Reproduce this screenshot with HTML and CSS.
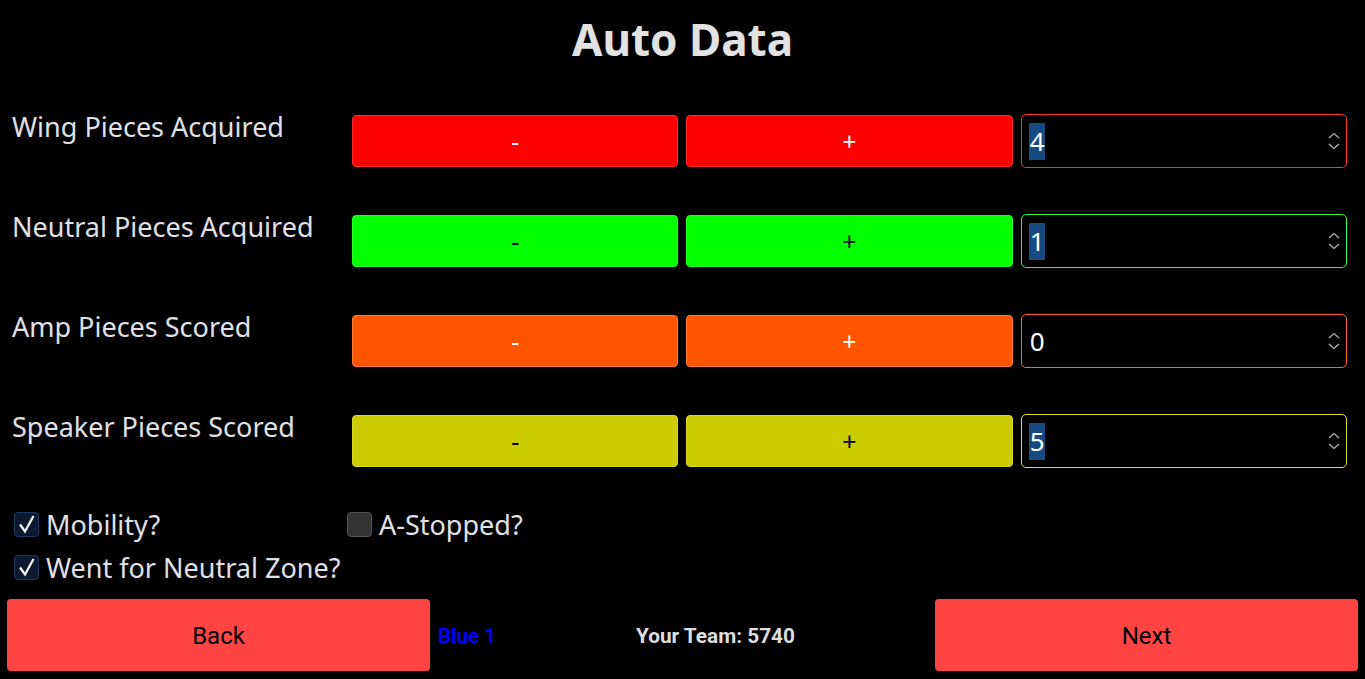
FILE: index.html
```html
<!DOCTYPE html>
<html>
<head>
<meta charset="utf-8">
<link rel="stylesheet" href="styles.css">
</head>
<body>
<h1 class="title">Auto Data</h1>
<div class="rows">
  <div class="row">
    <div class="label">Wing Pieces Acquired</div>
    <button class="btn red light">-</button>
    <button class="btn red light">+</button>
    <div class="num b-red"><span class="val sel">4</span><span class="spin"><svg width="12" height="18" viewBox="0 0 12 18"><path d="M1 6 L6 1.5 L11 6 M1 12 L6 16.5 L11 12" fill="none" stroke="#b5b5b5" stroke-width="1.2"/></svg></span></div>
  </div>
  <div class="row">
    <div class="label">Neutral Pieces Acquired</div>
    <button class="btn green">-</button>
    <button class="btn green">+</button>
    <div class="num b-green"><span class="val sel">1</span><span class="spin"><svg width="12" height="18" viewBox="0 0 12 18"><path d="M1 6 L6 1.5 L11 6 M1 12 L6 16.5 L11 12" fill="none" stroke="#b5b5b5" stroke-width="1.2"/></svg></span></div>
  </div>
  <div class="row">
    <div class="label">Amp Pieces Scored</div>
    <button class="btn orange light">-</button>
    <button class="btn orange light">+</button>
    <div class="num b-orange"><span class="val">0</span><span class="spin"><svg width="12" height="18" viewBox="0 0 12 18"><path d="M1 6 L6 1.5 L11 6 M1 12 L6 16.5 L11 12" fill="none" stroke="#b5b5b5" stroke-width="1.2"/></svg></span></div>
  </div>
  <div class="row">
    <div class="label">Speaker Pieces Scored</div>
    <button class="btn yellow">-</button>
    <button class="btn yellow">+</button>
    <div class="num b-yellow"><span class="val sel">5</span><span class="spin"><svg width="12" height="18" viewBox="0 0 12 18"><path d="M1 6 L6 1.5 L11 6 M1 12 L6 16.5 L11 12" fill="none" stroke="#b5b5b5" stroke-width="1.2"/></svg></span></div>
  </div>
</div>
<div class="checks">
  <div class="check-line">
    <label class="check first"><span class="box on"><svg width="20" height="20" viewBox="0 0 20 20"><path d="M3 10.5 L8 17.5 L16.5 2" fill="none" stroke="#fff" stroke-width="2.2"/></svg></span>Mobility?</label>
    <label class="check"><span class="box"></span>A-Stopped?</label>
  </div>
  <div class="check-line">
    <label class="check"><span class="box on"><svg width="20" height="20" viewBox="0 0 20 20"><path d="M3 10.5 L8 17.5 L16.5 2" fill="none" stroke="#fff" stroke-width="2.2"/></svg></span>Went for Neutral Zone?</label>
  </div>
</div>
<div class="footer">
  <button class="nav">Back</button>
  <div class="alliance">Blue 1</div>
  <div class="team">Your Team: 5740</div>
  <div></div>
  <button class="nav">Next</button>
</div>
</body>
</html>
```
FILE: styles.css
```css
html, body {
  margin: 0;
  padding: 0;
  background: #000;
}
body {
  width: 1365px;
  height: 679px;
  overflow: hidden;
  font-family: "Noto Sans", sans-serif;
  color: #e0e0e6;
}
.title {
  margin: 0;
  padding-top: 11px;
  height: 62px;
  text-align: center;
  font-size: 44px;
  font-weight: 700;
  line-height: 56px;
  color: #e2e2e2;
}
.rows {
  padding: 41px 18px 0 12px;
  display: flex;
  flex-direction: column;
  gap: 47px;
}
.row {
  display: grid;
  grid-template-columns: 332px 1fr 1fr 1fr;
  column-gap: 8px;
  align-items: center;
  height: 53px;
}
.label {
  align-self: start;
  font-size: 27px;
  line-height: 28px;
  margin-top: -1px;
  white-space: nowrap;
}
.btn {
  height: 52px;
  border-radius: 4px;
  font-family: "Noto Sans", sans-serif;
  font-size: 25px;
  color: #000;
  border: 1px solid transparent;
  padding: 0;
}
.btn.light { color: #fff; }
.red { background: #ff0000; border-color: #ff2a2a; }
.green { background: #00ff00; border-color: #22ff22; }
.orange { background: #ff5500; border-color: #ff7a33; }
.yellow { background: #cccc00; border-color: #d8d820; }
.num {
  height: 54px;
  box-sizing: border-box;
  border: 1px solid;
  border-radius: 5px;
  display: flex;
  align-items: center;
  justify-content: space-between;
  padding: 0 5px 0 7px;
}
.b-red { border-color: #ff3333; }
.b-green { border-color: #33ff33; }
.b-orange { border-color: #ff6622; }
.b-yellow { border-color: #e0e030; }
.val {
  font-size: 26px;
  line-height: 37px;
  color: #fff;
  padding: 0 0 0 1px;
}
.val.sel {
  background: #174a80;
}
.spin {
  display: flex;
  margin-right: 1px;
}
.checks {
  padding: 39px 0 0 14px;
  display: flex;
  flex-direction: column;
  gap: 7px;
}
.check-line {
  display: flex;
  height: 36px;
  align-items: center;
}
.check {
  display: flex;
  align-items: center;
  font-size: 27px;
  color: #e0e0e6;
}
.check.first {
  width: 333px;
}
.box {
  width: 25px;
  height: 25px;
  box-sizing: border-box;
  border-radius: 4px;
  background: #333;
  border: 1px solid #555;
  margin-right: 7px;
  display: flex;
  align-items: center;
  justify-content: center;
}
.box.on {
  background: #0b1a2e;
  border-color: #1e3a60;
}
.footer {
  position: absolute;
  left: 7px;
  top: 599px;
  width: 1351px;
  display: grid;
  grid-template-columns: 423px 206px auto 1fr 423px;
  align-items: center;
}
.nav {
  height: 72px;
  padding-top: 3px;
  background: #ff4444;
  border: none;
  border-radius: 4px;
  font-family: Roboto, sans-serif;
  font-size: 24px;
  color: #000;
}
.alliance {
  padding-left: 8px;
  padding-top: 2px;
  font-family: Roboto, sans-serif;
  font-weight: 700;
  font-size: 20.5px;
  color: #0000ff;
}
.team {
  padding-top: 2px;
  font-family: Roboto, sans-serif;
  font-weight: 700;
  font-size: 20.8px;
  color: #dedede;
}
```
